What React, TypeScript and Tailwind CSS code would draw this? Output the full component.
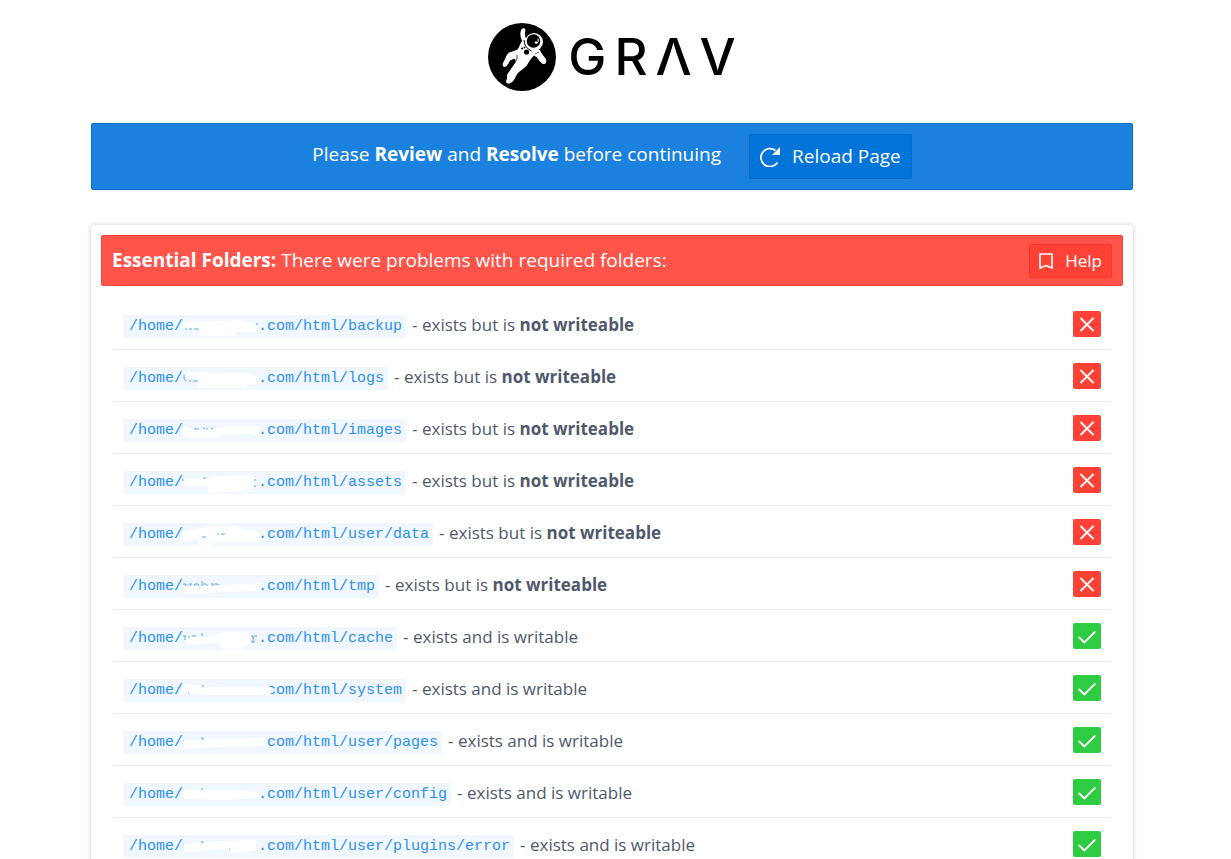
type Folder = {
  tail: string;
  writable: boolean;
  smear: string;
  marks: string;
};

const folders: Folder[] = [
  {
    tail: ".com/html/backup",
    writable: false,
    smear: "M-1 7L59 5L65 7L73 9V17H53V21H16V14H1Z",
    marks: "M2 14H4M6 14H9M11 14H16M74 8V10",
  },
  {
    tail: ".com/html/logs",
    writable: false,
    smear: "M2 5L10 5L67 6L69 8L74 9V16L64 18V21H15V11H6L2 8Z",
    marks: "M1 8V12L3 14M6 14H8M10 14H15",
  },
  {
    tail: ".com/html/images",
    writable: false,
    smear: "M-2 11L2 7L10 10L34 9L45 7H76V17L67 15L39 16L34 19H7L-1 15Z",
    marks: "M11 10H16M20 9L22 10M23 10H25M28 9L30 10",
  },
  {
    tail: ".com/html/assets",
    writable: false,
    smear: "M0 8L24 7L37 5L69 4L72 8L71 16L60 20L37 21L25 22V15H1Z",
    marks: "M0 8V10M20 7H23M71 9H73M71 15H73",
  },
  {
    tail: ".com/html/user/data",
    writable: false,
    smear: "M-1 9L15 6L27 3H50L60 6L74 8L76 11V19H32L30 23H16V16L0 18Z",
    marks: "M19 14H23M34 11H36M38 11H42",
  },
  {
    tail: ".com/html/tmp",
    writable: false,
    smear: "M1 11H29L37 10L76 8V16L37 17L24 19H1Z",
    marks:
      "M0 9H3M2 9L3 11M4 10H5M7 11L8 9M6 9H9M11 11L12 9H15L16 11M19 6V11M20 9H23L25 11M28 9H30V11M31 9H34L36 10",
  },
  {
    tail: ".com/html/cache",
    writable: true,
    smear: "M2 10H24L40 5H68V16L60 22H37V16L3 18Z",
    marks: "M0 9H3M2 9V13M5 10H7M9 9H13M19 6V9M68 9H70V15M68 15H72M70 11L72 9H74",
  },
  {
    tail: ".com/html/system",
    writable: true,
    smear: "M-2 10L2 6H14L20 9L37 8H88V16H30L9 15L-1 15Z",
    marks: "M5 14H6M20 6V8",
  },
  {
    tail: ".com/html/user/pages",
    writable: true,
    smear: "M1 9L34 8L82 7V15L34 16L1 18Z",
    marks: "M0 9V10M18 7H20V9",
  },
  {
    tail: ".com/html/user/config",
    writable: true,
    smear: "M0 7H65L77 10V15L65 16L42 17L0 16Z",
    marks: "M18 6H20",
  },
  {
    tail: ".com/html/user/plugins/error",
    writable: true,
    smear: "M1 9L34 6L73 5V15L60 18H47L46 14L1 17Z",
    marks: "M0 9V10M18 7H20V8M46 14H47",
  },
];

const Astronaut = () => (
  <svg viewBox="0 0 68 68" className="h-[68px] w-[68px]" aria-hidden="true">
    <circle cx="34" cy="34" r="34" fill="#000" />
    <g fill="#fff">
      {/* raised arm, torso and legs */}
      <path d="M32.5 9.5C33 6 34 5 36 5.200C37.500 5.500 37.800 7 37 9C36.500 11 37.500 13.500 38 16C37 20 39 24 43 25.500C46 26.500 49 26 51 26.500C53 28 53.500 30.500 55.500 33C57.500 35 59 37.500 58 40C56.500 42 54.500 41 53 39.500C50.500 37.500 49.500 34 46 32.500C43 35 41 39 38.500 43C35.500 46 31 48 28.500 52C26.500 56 25 59.500 21.500 60.500C19 61 17.500 59.500 18.300 57.500C19.500 55.500 19 53 19 52C21 48 26 43 27.500 38C28 35 25 36 22 37.500C20.500 40 20 43 17 44C14.500 44 14 41 15.500 39C17 36.500 18 32.500 20.500 30C23 28 27 28.500 29.500 26.500C31.500 24 32 20.500 34 18C33 15 32 12.500 32.500 9.500Z" />
      <circle cx="46" cy="19" r="9" />
    </g>
    <circle cx="45.500" cy="18" r="6.800" fill="#000" />
    <path d="M50 15.500Q51 18.500 49 20.500" fill="none" stroke="#fff" />
    <circle cx="48" cy="19.500" r="1.300" fill="#fff" />
    <path d="M36 17Q36.500 25 43.500 28" fill="none" stroke="#000" />
    <path
      d="M19 42Q23 44 27 40Q30 36 29 32"
      fill="none"
      stroke="#000"
      strokeWidth="0.7"
    />
    <circle cx="38.500" cy="29" r="2.600" fill="#000" />
    <circle cx="34" cy="25.500" r="1.100" fill="#000" />
    <circle cx="36.500" cy="24.500" r="0.900" fill="#000" />
    <path d="M47 31L51 29" stroke="#000" strokeWidth="0.6" />
  </svg>
);

const Logo = () => (
  <div className="flex h-[68px] items-center justify-center gap-3">
    <Astronaut />
    <div
      className="flex gap-2 pb-[2px] font-[Inter] text-[51px] leading-none font-medium text-black"
      aria-label="Grav"
    >
      <span>G</span>
      <span>R</span>
      <span>Λ</span>
      <span>V</span>
    </div>
  </div>
);

const ReloadIcon = () => (
  <svg viewBox="0 0 20 20" className="h-5 w-5" aria-hidden="true">
    <path
      d="M15.500 3.500A9 9 0 1 0 17.500 15.500"
      fill="none"
      stroke="#fff"
      strokeWidth="1.800"
    />
    <path d="M20 0V8H12Z" fill="#fff" />
  </svg>
);

const BookmarkIcon = () => (
  <svg viewBox="0 0 14 16" className="h-4 w-[14px]" aria-hidden="true">
    <path
      d="M1 1H13V15L7 12.500L1 15Z"
      fill="none"
      stroke="#fff"
      strokeWidth="1.600"
    />
  </svg>
);

const StatusBadge = ({ ok }: { ok: boolean }) => (
  <span
    role="img"
    aria-label={ok ? "OK" : "Problem"}
    className={`flex h-[26px] w-7 shrink-0 rounded-xs ${ok ? "bg-[#2ecc40]" : "bg-[#ff4136]"}`}
  >
    <svg viewBox="0 0 28 26" fill="none" stroke="#fff" className="h-[26px] w-7">
      {ok ? (
        <path d="M5.700 14L11.300 19.500L22.300 8.500" strokeWidth="1.800" />
      ) : (
        <path d="M7.500 7L20.500 20M20.500 7L7.500 20" strokeWidth="1.800" />
      )}
    </svg>
  </span>
);

const FolderRow = ({ tail, writable, smear, marks }: Folder) => (
  <li className="flex h-[52px] items-center justify-between border-b border-[#e7e9ed] px-[10px]">
    <div className="flex items-center gap-[6px]">
      <code className="mt-[6px] flex h-[23px] items-center rounded-xs bg-[#f0f7ff] pr-1 pl-[6px] font-['Liberation_Mono',monospace] text-[15px] text-[#2e8ff0]">
        <span className="pt-[2px]">/home/</span>
        <svg
          viewBox="0 0 75 23"
          className="relative h-[23px] w-[75px] overflow-visible"
          aria-hidden="true"
        >
          <path d={smear} fill="#fff" />
          <path d={marks} fill="none" stroke="#5ba8f3" />
        </svg>
        <span className="pt-[2px]">{tail}</span>
      </code>
      <span className="pt-[2px]">
        - exists{" "}
        {writable ? (
          "and is writable"
        ) : (
          <>
            but is <strong className="font-bold">not writeable</strong>
          </>
        )}
      </span>
    </div>
    <StatusBadge ok={writable} />
  </li>
);

const App = () => {
  return (
    <main className="bg-white pt-[23px] pr-[98px] pl-[91px] font-['Open_Sans',sans-serif] text-[17px] text-[#50596c]">
      <Logo />

      {/* Reload notice */}
      <div className="mt-8 flex h-[67px] items-center justify-center gap-7 rounded-xs border border-[#0b6fcb] bg-[#1a82de] text-[19px] text-white">
        <p className="pb-1">
          Please <strong>Review</strong> and <strong>Resolve</strong> before
          continuing
        </p>
        <button
          type="button"
          className="flex h-[45px] items-center gap-3 rounded-xs border border-[#006bc8] bg-[#0074d9] px-[10px]"
          onClick={() => window.location.reload()}
        >
          <ReloadIcon />
          Reload Page
        </button>
      </div>

      {/* Folder checks */}
      <section className="mt-[35px] rounded-xs p-[10px] shadow-[0_0_5px_rgba(0,0,0,0.2)]">
        <div className="flex h-[51px] items-center justify-between rounded-xs border border-[#ff4136] bg-[#ff544a] px-[10px] text-white">
          <h2 className="text-[19px]">
            <strong>Essential Folders:</strong> There were problems with
            required folders:
          </h2>
          <a
            href="#help"
            className="flex h-[34px] items-center gap-3 rounded-xs border border-[#ff3427] bg-[#ff4136] px-[9px]"
          >
            <BookmarkIcon />
            Help
          </a>
        </div>
        <ul className="mt-3 px-3">
          {folders.map((folder) => (
            <FolderRow key={folder.tail} {...folder} />
          ))}
        </ul>
      </section>
    </main>
  );
};

export default App;
